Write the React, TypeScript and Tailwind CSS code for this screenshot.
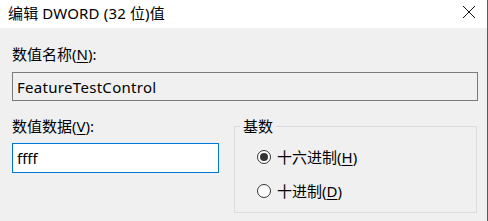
import React from "react";

const font = { fontFamily: '"Noto Sans", "Noto Sans CJK SC", sans-serif' };

function Radio({ checked, label, hot }: { checked?: boolean; label: string; hot: string }) {
  return (
    <div className="flex items-center h-5">
      <span className="w-[14px] h-[14px] rounded-full border border-[#333] bg-white flex items-center justify-center">
        {checked && <span className="w-[8px] h-[8px] rounded-full bg-[#333]" />}
      </span>
      <span className="ml-[6px] leading-5">
        {label}(<span className="underline underline-offset-2">{hot}</span>)
      </span>
    </div>
  );
}

export default function App() {
  return (
    <div
      className="w-[488px] h-[221px] bg-[#f0f0f0] border-r border-[#5a5a5a] flex flex-col text-[15px] text-black overflow-hidden"
      style={font}
    >
      <div className="h-7 bg-white flex items-center justify-between pl-2 pr-[11px] shrink-0">
        <span className="leading-5 -mt-[3px] tracking-[0.15px]">编辑 DWORD (32 位)值</span>
        <svg width="14" height="14" viewBox="0 0 14 14" className="-mt-[4px]">
          <path d="M1 1 L13 13 M13 1 L1 13" stroke="#111" strokeWidth="1" fill="none" />
        </svg>
      </div>
      <div className="flex flex-col pl-3 pt-4">
        <div className="leading-5 h-5">
          数值名称(<span className="underline underline-offset-2">N</span>):
        </div>
        <div className="mt-2 w-[466px] h-[29px] border border-[#7a7a7a] bg-[#f0f0f0] flex items-center pl-[4px] leading-5 tracking-[0.3px]">
          FeatureTestControl
        </div>
        <div className="flex mt-[15px]">
          <div className="flex flex-col w-[207px]">
            <div className="leading-5 h-5">
              数值数据(<span className="underline underline-offset-2">V</span>):
            </div>
            <div className="mt-[7px] w-[207px] h-[30px] border border-[#0078d7] bg-white flex items-center pl-[4px] leading-5">
              ffff
            </div>
          </div>
          <fieldset className="ml-[15px] w-[243px] h-[97px] border border-[#dcdcdc] pl-[22px]">
            <legend className="ml-[-17px] px-[3px] leading-5">基数</legend>
            <div className="flex flex-col gap-[14px] mt-[11px]">
              <Radio checked label="十六进制" hot="H" />
              <Radio label="十进制" hot="D" />
            </div>
          </fieldset>
        </div>
      </div>
    </div>
  );
}
